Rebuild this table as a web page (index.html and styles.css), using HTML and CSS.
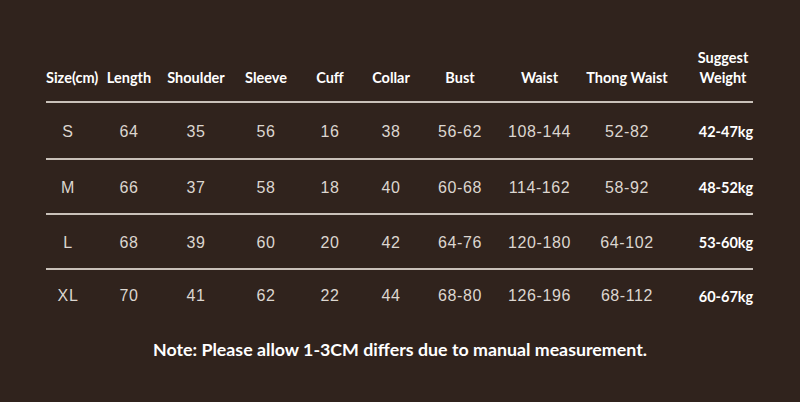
FILE: index.html
```html
<!DOCTYPE html>
<html>
<head>
<meta charset="utf-8">
<link rel="stylesheet" href="styles.css">
</head>
<body>
<div class="chart">
  <div class="row head">
    <div class="c">Size(cm)</div>
    <div class="c">Length</div>
    <div class="c">Shoulder</div>
    <div class="c">Sleeve</div>
    <div class="c">Cuff</div>
    <div class="c">Collar</div>
    <div class="c">Bust</div>
    <div class="c">Waist</div>
    <div class="c">Thong Waist</div>
    <div class="c">Suggest<br>Weight</div>
  </div>
  <div class="row data first">
    <div class="c sz">S</div><div class="c">64</div><div class="c">35</div><div class="c">56</div><div class="c">16</div><div class="c">38</div><div class="c">56-62</div><div class="c">108-144</div><div class="c">52-82</div><div class="c kg">42-47kg</div>
  </div>
  <div class="row data">
    <div class="c sz">M</div><div class="c">66</div><div class="c">37</div><div class="c">58</div><div class="c">18</div><div class="c">40</div><div class="c">60-68</div><div class="c">114-162</div><div class="c">58-92</div><div class="c kg">48-52kg</div>
  </div>
  <div class="row data">
    <div class="c sz">L</div><div class="c">68</div><div class="c">39</div><div class="c">60</div><div class="c">20</div><div class="c">42</div><div class="c">64-76</div><div class="c">120-180</div><div class="c">64-102</div><div class="c kg">53-60kg</div>
  </div>
  <div class="row data last">
    <div class="c sz">XL</div><div class="c">70</div><div class="c">41</div><div class="c">62</div><div class="c">22</div><div class="c">44</div><div class="c">68-80</div><div class="c">126-196</div><div class="c">68-112</div><div class="c kg">60-67kg</div>
  </div>
</div>
<p class="note">Note: Please allow 1-3CM differs due to manual measurement.</p>
</body>
</html>
```
FILE: styles.css
```css
html, body {
  margin: 0;
  padding: 0;
  background: #30231d;
  width: 800px;
  height: 402px;
  overflow: hidden;
}
.chart {
  margin-left: 46px;
  width: 707px;
  padding-top: 48px;
}
.row {
  display: grid;
  grid-template-columns: 52px 62px 72px 68px 60px 62px 76px 83px 92px 100px;
  width: 707px;
}
.c {
  text-align: center;
  white-space: nowrap;
}
.head {
  font-family: Lato, "Open Sans", sans-serif;
  font-weight: 700;
  font-size: 14.5px;
  line-height: 20px;
  color: #ffffff;
  align-items: end;
  padding-bottom: 13px;
  border-bottom: 2px solid #c9c1b9;
}
.data {
  font-family: "Liberation Sans", Arial, sans-serif;
  font-size: 16px;
  letter-spacing: 0.6px;
  color: #dcd6d0;
  height: 51px;
  align-items: center;
  padding-top: 2px;
  border-bottom: 2px solid #c9c1b9;
}
.data.first {
  height: 53px;
}
.data.last {
  border-bottom: none;
  padding-top: 0;
  height: 52px;
}
.sz {
  padding-right: 8px;
}
.kg {
  font-family: Lato, "Open Sans", sans-serif;
  font-weight: 700;
  font-size: 14.5px;
  letter-spacing: 0;
  color: #ffffff;
  padding-left: 6px;
}
.note {
  margin: 16px 0 0 0;
  text-align: center;
  font-family: Lato, "Open Sans", sans-serif;
  font-weight: 700;
  font-size: 17.8px;
  color: #ffffff;
}
```
